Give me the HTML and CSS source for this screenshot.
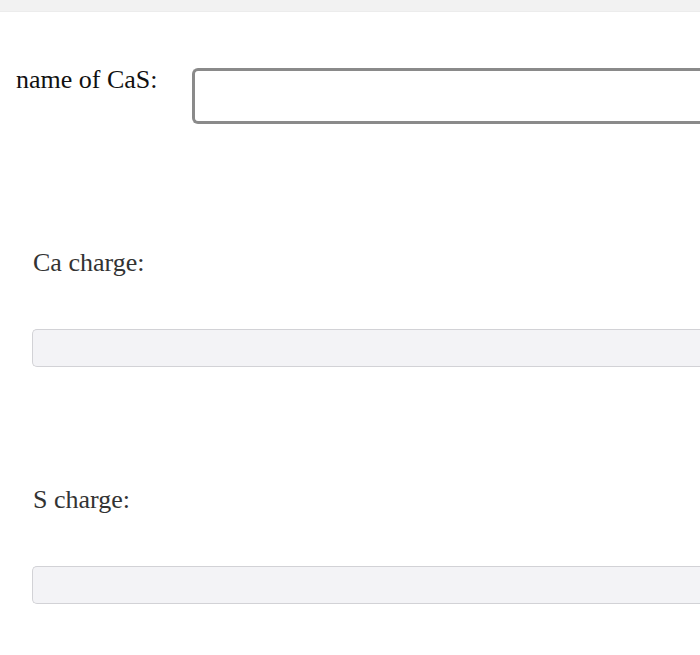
FILE: index.html
```html
<!DOCTYPE html>
<html>
<head>
<meta charset="utf-8">
<link rel="stylesheet" href="styles.css">
</head>
<body>
<div class="topbar"></div>
<div class="page">
  <div class="name-row">
    <label class="name-label">name of CaS:</label>
    <div class="name-input"></div>
  </div>
  <div class="charge">
    <div class="charge-label">Ca charge:</div>
    <div class="charge-input"></div>
  </div>
  <div class="charge charge-s">
    <div class="charge-label">S charge:</div>
    <div class="charge-input"></div>
  </div>
</div>
</body>
</html>
```

FILE: styles.css
```css
html, body {
  margin: 0;
  padding: 0;
  background: #ffffff;
  overflow: hidden;
  width: 700px;
  height: 655px;
}
body {
  font-family: "Liberation Serif", "Times New Roman", serif;
}
.topbar {
  height: 11px;
  background: #f2f2f2;
  border-bottom: 1px solid #ececec;
}
.page {
  width: 700px;
}
.name-row {
  display: flex;
  align-items: flex-start;
  margin-top: 53px;
  padding-left: 16px;
}
.name-label {
  font-size: 26px;
  line-height: 30px;
  color: #111111;
  width: 176px;
  flex: none;
}
.name-input {
  margin-top: 3px;
  height: 50px;
  flex: 1;
  border: 3px solid #8a8a8a;
  border-right: none;
  border-radius: 6px 0 0 6px;
  background: #ffffff;
}
.charge {
  padding-left: 32px;
  margin-top: 124px;
}
.charge-s {
  margin-top: 118px;
}
.charge-label {
  font-size: 26px;
  line-height: 30px;
  color: #333333;
  padding-left: 1px;
}
.charge-input {
  margin-top: 51px;
  height: 36px;
  border: 1px solid #d2d2d6;
  border-right: none;
  border-radius: 5px 0 0 5px;
  background: #f3f3f6;
}
```
